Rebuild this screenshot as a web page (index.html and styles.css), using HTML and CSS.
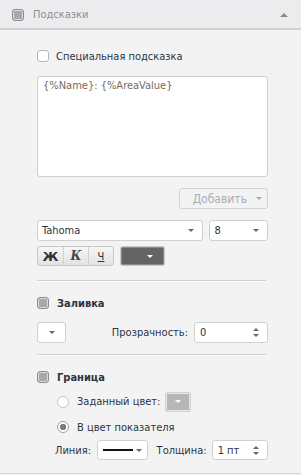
FILE: index.html
```html
<!DOCTYPE html>
<html>
<head>
<meta charset="utf-8">
<link rel="stylesheet" href="styles.css">
</head>
<body>
<div class="panel">
  <div class="header">
    <span class="cb cb-gray"></span>
    <span class="header-title">Подсказки</span>
    <span class="collapse"></span>
  </div>
  <div class="content">
    <label class="row check-row">
      <span class="cb"></span>
      <span class="lbl">Специальная подсказка</span>
    </label>
    <div class="textarea">{%Name}: {%AreaValue}</div>
    <div class="add-row">
      <div class="btn-add"><span>Добавить</span><span class="tri tri-light"></span></div>
    </div>
    <div class="font-row">
      <div class="select font-sel"><span>Tahoma</span><span class="tri"></span></div>
      <div class="select size-sel"><span>8</span><span class="tri"></span></div>
    </div>
    <div class="style-row">
      <div class="btn-group">
        <div class="gbtn b">Ж</div>
        <div class="gbtn i">К</div>
        <div class="gbtn u">Ч</div>
      </div>
      <div class="color-btn dark"><span class="tri tri-white"></span></div>
    </div>
    <div class="sep"></div>
    <label class="row section-row">
      <span class="cb cb-gray"></span>
      <span class="lbl bold">Заливка</span>
    </label>
    <div class="fill-row">
      <div class="small-sel"><span class="tri"></span></div>
      <span class="lbl opacity-lbl">Прозрачность:</span>
      <div class="spin opacity-spin"><span>0</span><span class="spin-arrows"><i class="up"></i><i class="down"></i></span></div>
    </div>
    <div class="sep sep2"></div>
    <label class="row section-row border-title">
      <span class="cb cb-gray"></span>
      <span class="lbl bold">Граница</span>
    </label>
    <div class="radio-row r1">
      <span class="radio"></span>
      <span class="lbl">Заданный цвет:</span>
      <div class="color-btn light"><span class="tri tri-white"></span></div>
    </div>
    <div class="radio-row r2">
      <span class="radio checked"></span>
      <span class="lbl">В цвет показателя</span>
    </div>
    <div class="line-row">
      <span class="lbl">Линия:</span>
      <div class="select line-sel"><span class="line-sample"></span><span class="tri"></span></div>
      <span class="lbl thick-lbl">Толщина:</span>
      <div class="spin thick-spin"><span>1 пт</span><span class="spin-arrows"><i class="up"></i><i class="down"></i></span></div>
    </div>
  </div>
</div>
</body>
</html>
```

FILE: styles.css
```css
* { box-sizing: border-box; }
html, body { margin: 0; padding: 0; }
body {
  width: 301px;
  height: 475px;
  background: #f3f3f3;
  font-family: "DejaVu Sans Condensed", "DejaVu Sans", Tahoma, sans-serif;
  font-stretch: condensed;
  font-size: 11px;
  color: #2d3442;
  overflow: hidden;
}
.panel {
  width: 301px;
  height: 474px;
  border-bottom: 1px solid #d6d6d6;
}
.header {
  height: 30px;
  background: #ececee;
  border-bottom: 2px solid #d2d2d4;
  display: flex;
  align-items: center;
  padding-left: 12px;
  padding-top: 1px;
}
.header-title {
  color: #8a8e96;
  margin-left: 9px;
  font-size: 11px;
}
.collapse {
  margin-left: auto;
  margin-right: 13px;
  width: 0; height: 0;
  border-left: 4px solid transparent;
  border-right: 4px solid transparent;
  border-bottom: 4px solid #8a8a8a;
}
.cb {
  display: inline-block;
  width: 12px; height: 12px;
  border: 1px solid #b8b8b8;
  border-radius: 3px;
  background: #fff;
  flex: none;
}
.cb-gray {
  background: #a9a9ad;
  border-color: #8d8d91;
  box-shadow: inset 0 0 0 1px #dcdcde;
}
.content {
  padding: 0 33px 0 37px;
}
.row { display: flex; align-items: center; }
.check-row { margin-top: 20px; height: 12px; }
.lbl { white-space: nowrap; }
.check-row .lbl { margin-left: 7px; }
.textarea {
  margin-top: 14px;
  height: 101px;
  background: #fff;
  border: 1px solid #cfcfcf;
  border-radius: 3px;
  padding: 2px 5px;
  color: #7a6a5a;
}
.add-row { display: flex; justify-content: flex-end; margin-top: 11px; }
.btn-add {
  width: 89px; height: 21px;
  border: 1px solid #d3d3d3;
  border-radius: 3px;
  display: flex; align-items: center; justify-content: flex-end;
  padding-right: 5px;
  color: #a7b0b8;
  font-size: 12px;
  gap: 9px;
}
.tri {
  display: inline-block;
  width: 0; height: 0;
  border-left: 3px solid transparent;
  border-right: 3px solid transparent;
  border-top: 3px solid #666;
}
.tri-light { border-top-color: #a8a8a8; }
.tri-white { border-top-color: #fff; }
.font-row { display: flex; gap: 6px; margin-top: 11px; }
.select {
  height: 21px;
  background: #fff;
  border: 1px solid #d0d0d0;
  border-radius: 3px;
  display: flex; align-items: center; justify-content: space-between;
  padding: 0 8px 0 4px;
}
.font-sel { width: 168px; }
.size-sel { width: 59px; }
.style-row { display: flex; gap: 6px; margin-top: 5px; }
.btn-group {
  display: flex;
  border: 1px solid #c8c8c8;
  border-radius: 3px;
  height: 20px;
  background: linear-gradient(#f6f6f6, #e2e2e2);
}
.gbtn {
  width: 25px;
  display: flex; align-items: center; justify-content: center;
  border-left: 1px solid #cfcfcf;
  color: #333;
  font-size: 12px;
}
.gbtn:first-child { border-left: none; }
.gbtn.b { font-weight: bold; font-family: "DejaVu Sans", sans-serif; font-stretch: normal; font-size: 13px; }
.gbtn.i { font-style: italic; font-family: "DejaVu Serif", serif; font-weight: bold; font-stretch: normal; color: #444; }
.gbtn.u { text-decoration: underline; font-size: 11px; }
.color-btn {
  height: 20px;
  border-radius: 3px;
  display: flex; align-items: center; justify-content: flex-end;
}
.color-btn.dark {
  width: 45px;
  background: #646464;
  border: 1px solid #c8c8c8;
  box-shadow: inset 0 0 0 1px #8a8a8a;
  padding-right: 11px;
}
.color-btn.light {
  width: 26px;
  background: #b7b7b7;
  border: 1px solid #d0d0d0;
  box-shadow: inset 0 0 0 1px #e8e8e8;
  justify-content: center;
  margin-left: 5px;
}
.sep {
  height: 2px;
  border-top: 1px solid #cfcfcf;
  border-bottom: 1px solid #fafafa;
  margin-top: 14px;
  margin-right: 2px;
}
.section-row { margin-top: 15px; height: 12px; }
.section-row .lbl { margin-left: 8px; }
.bold { font-weight: bold; }
.fill-row { display: flex; align-items: center; margin-top: 13px; }
.small-sel {
  width: 29px; height: 21px;
  background: #fff;
  border: 1px solid #d0d0d0;
  border-radius: 3px;
  display: flex; align-items: center; justify-content: center;
}
.opacity-lbl { margin-left: auto; margin-right: 6px; }
.spin {
  height: 21px;
  background: #fff;
  border: 1px solid #d0d0d0;
  border-radius: 3px;
  display: flex; align-items: center; justify-content: space-between;
  padding: 0 8px 0 5px;
}
.opacity-spin { width: 74px; }
.spin-arrows { display: flex; flex-direction: column; gap: 3px; }
.spin-arrows i {
  display: block; width: 0; height: 0;
  border-left: 3px solid transparent;
  border-right: 3px solid transparent;
}
.spin-arrows .up { border-bottom: 3px solid #666; }
.spin-arrows .down { border-top: 3px solid #666; }
.sep2 { margin-top: 11px; }
.border-title { margin-top: 15px; }
.radio-row { display: flex; align-items: center; padding-left: 20px; }
.radio-row .lbl { margin-left: 8px; }
.r1 { margin-top: 8px; height: 21px; }
.r2 { margin-top: 9px; height: 12px; }
.radio {
  width: 12px; height: 12px;
  border-radius: 50%;
  border: 1px solid #c6c6c6;
  background: #fff;
  flex: none;
}
.radio.checked {
  border-color: #a0a0a0;
  background: radial-gradient(circle, #7d7d7d 0 3px, #fff 3.5px);
}
.line-row { display: flex; align-items: center; margin-top: 7px; padding-left: 18px; }
.line-sel { width: 53px; margin-left: 6px; height: 20px; padding: 0 5px 0 5px; }
.line-sample { width: 30px; height: 2px; background: #111; }
.thick-lbl { margin-left: 9px; }
.thick-spin { width: 59px; margin-left: 5px; height: 20px; }
```
